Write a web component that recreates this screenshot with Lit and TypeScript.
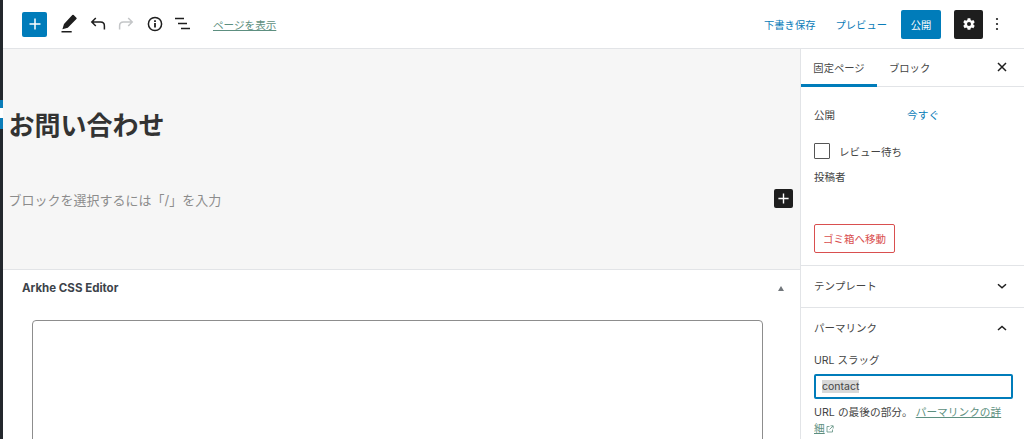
import { LitElement, html, css } from "lit";
import { customElement } from "lit/decorators.js";

@customElement("app-root")
export class AppRoot extends LitElement {
  static styles = css`
    :host { display: block; width: 1024px; height: 439px; overflow: hidden; background: #fff; position: relative;
      font-family: "Inter", "Noto Sans CJK JP", sans-serif; color: #444; font-size: 10.5px; }
    * { box-sizing: border-box; }
    svg { display: block; }
    .frame { display: flex; height: 439px; }
    .strip { width: 3px; background: #23282d; flex: none; display: flex; flex-direction: column; padding-top: 100px; }
    .strip i { display: block; width: 3px; height: 8px; background: #0a7cb8; }
    .strip b { display: block; width: 3px; height: 10px; background: #fff; }
    .strip u { display: block; width: 3px; height: 11px; background: #0a7cb8; }
    .main { flex: 1; display: flex; flex-direction: column; min-width: 0; }
    .top { height: 49px; flex: none; border-bottom: 1px solid #e2e4e7; display: flex; align-items: center; padding: 0 19px 0 19px; }
    .add { width: 25px; height: 25px; background: #007cba; border-radius: 2px; display: flex; align-items: center; justify-content: center; margin-right: 10px; }
    .ico { width: 24px; height: 24px; margin-right: 4.6px; flex: none; }
    .view { margin-left: 13px; color: #5d8f80; text-decoration: underline; font-size: 10.6px; }
    .sp { flex: 1; }
    .link { color: #0a7cb8; font-size: 10.3px; }
    .draft { margin-right: 20px; }
    .pub { width: 40px; height: 29px; background: #007cba; color: #fff; border-radius: 2px; display: flex; align-items: center; justify-content: center; font-size: 10.3px; margin: 0 13px 0 14px; }
    .gear { width: 29px; height: 29px; background: #1e1e1e; border-radius: 2px; display: flex; align-items: center; justify-content: center; margin-right: 8px; }
    .body { flex: 1; display: flex; min-height: 0; }
    .content { width: 797px; flex: none; display: flex; flex-direction: column; }
    .canvas { height: 221px; flex: none; background: #f6f6f6; border-bottom: 1px solid #e2e4e7; padding: 58px 7px 0 6px; }
    .title { font-size: 26px; line-height: 38px; font-weight: 700; color: #333; margin: 0 0 0 -.5px; }
    .hint { display: flex; align-items: center; justify-content: space-between; margin-top: 42px; height: 24px; color: #8c8c8c; font-size: 13px; }
    .hint span { margin-left: -.5px; }
    .plus { width: 19px; height: 19px; background: #1e1e1e; border-radius: 2px; display: flex; align-items: center; justify-content: center; margin-top: -1px; }
    .meta { flex: 1; padding: 0 29px 0 19px; }
    .meta-h { display: flex; align-items: center; justify-content: space-between; height: 36px; font-weight: 700; font-size: 11.5px; color: #3c434a; }
    .tri { width: 0; height: 0; border: 3px solid transparent; border-bottom: 5px solid #72777c; border-top: 0; margin-right: -13px; }
    .ta { margin: 14px 0 0 10px; width: 731px; height: 140px; border: 1px solid #8d8d8d; border-radius: 4px; }
    .side { flex: 1; border-left: 1px solid #e2e4e7; min-width: 0; display: flex; flex-direction: column; }
    .tabs { height: 38px; flex: none; border-bottom: 1px solid #e2e4e7; display: flex; align-items: center; position: relative; }
    .tab { height: 38px; display: flex; align-items: center; justify-content: center; font-size: 10.3px; }
    .tab.on { width: 76px; border-bottom: 3px solid #007cba; padding-top: 3px; }
    .tab.b { margin-left: 12px; }
    .close { margin: -2px 16px 0 auto; }
    .sec { padding: 0 11px 0 13px; border-bottom: 1px solid #e2e4e7; }
    .publish { height: 179px; padding-top: 19px; }
    .row { display: flex; align-items: center; height: 16px; }
    .row .link { margin-left: 72px; font-size: 10.7px; }
    .check { display: flex; align-items: center; gap: 9px; margin-top: 21px; height: 16px; }
    .box { width: 16px; height: 16px; border: 1px solid #555; border-radius: 1px; }
    .author { margin-top: 11px; line-height: 16px; }
    .trash { margin-top: 38px; width: 81px; height: 29px; border: 1px solid #d94f4f; border-radius: 2px; color: #d94f4f; display: flex; align-items: center; justify-content: center; font-size: 10.5px; }
    .head { display: flex; align-items: center; justify-content: space-between; height: 41px; padding-bottom: 2px; }
    .tpl { height: 42px; padding-right: 15px; }
    .perm { border: 0; }
    .perm .head { padding-right: 4px; }
    .slug { margin-top: 4px; line-height: 16px; }
    .inp { margin-top: 5px; width: 199px; height: 25px; border: 2px solid #007cba; border-radius: 2px; display: flex; align-items: center; padding-left: 6px; }
    .inp span { background: #d8d8d8; }
    .help { margin-top: 6px; line-height: 16px; width: 192px; font-size: 10.7px; }
    .help a { color: #5d8f80; text-decoration: underline; }
    .help svg { display: inline; vertical-align: -1px; margin-left: 1px; }
  `;

  render() {
    const plus = (c: string, s = 14) => html`<svg width=${s} height=${s} viewBox="0 0 14 14"><path d="M7 1.500v11M1.500 7h11" stroke=${c} stroke-width="1.500" fill="none"/></svg>`;
    const chev = (up: boolean) => html`<svg width="14" height="14" viewBox="0 0 14 14"><path d=${up ? "M3 9l4-3.600L11 9" : "M3 5.200l4 3.600 4-3.600"} stroke="#1e1e1e" stroke-width="1.500" fill="none"/></svg>`;
    return html`
      <div class="frame">
        <div class="strip"><i></i><b></b><u></u></div>
        <div class="main">
          <div class="top">
            <div class="add">${plus("#fff")}</div>
            <svg class="ico" viewBox="0 0 24 24"><path d="M19.400 6.200l-2.700-2.600a1 1 0 0 0-1.400 0L7 12.500 5.400 17.800l5.400-1.500 8.600-8.700a1 1 0 0 0 0-1.400zM4.500 19.500h10.200V21H4.500z" fill="#1e1e1e" transform="translate(0 -.5)"/></svg>
            <svg class="ico" viewBox="0 0 24 24"><path d="M18.400 17.500v-3.600c0-2.200-1.600-3.900-3.800-3.900H6.200M9.800 6l-4 4 4 4" fill="none" stroke="#1e1e1e" stroke-width="1.500"/></svg>
            <svg class="ico" viewBox="0 0 24 24"><path d="M5.600 17.500v-3.600c0-2.200 1.600-3.900 3.800-3.900h8.400M14.200 6l4 4-4 4" fill="none" stroke="#c4c6c8" stroke-width="1.500"/></svg>
            <svg class="ico" viewBox="0 0 24 24"><circle cx="12" cy="12" r="6.600" fill="none" stroke="#1e1e1e" stroke-width="1.500"/><path d="M11.100 11h1.800v4.600h-1.800zM11.100 8.200h1.800V10h-1.800z" fill="#1e1e1e"/></svg>
            <svg class="ico" viewBox="0 0 24 24"><path d="M5 6.800h9M8 11.800h9M11 16.800h9" stroke="#1e1e1e" stroke-width="1.500" fill="none" transform="translate(-1 -.3)"/></svg>
            <span class="view">ページを表示</span>
            <span class="sp"></span>
            <span class="link draft">下書き保存</span>
            <span class="link">プレビュー</span>
            <div class="pub">公開</div>
            <div class="gear"><svg width="16" height="16" viewBox="0 0 24 24"><path fill="#fff" fill-rule="evenodd" d="M10 3.500h4l.5 2.600 1.600.9 2.500-.9 2 3.400-2 1.700v1.900l2 1.700-2 3.400-2.500-.9-1.600.9-.5 2.600h-4l-.5-2.600-1.600-.9-2.500.9-2-3.400 2-1.700v-1.900l-2-1.700 2-3.400 2.500.9 1.600-.9zM12 9a3 3 0 1 0 0 6 3 3 0 0 0 0-6z"/></svg></div>
            <svg width="14" height="24" viewBox="0 0 14 24"><circle cx="6" cy="7" r="1.100" fill="#1e1e1e"/><circle cx="6" cy="12" r="1.100" fill="#1e1e1e"/><circle cx="6" cy="17" r="1.100" fill="#1e1e1e"/></svg>
          </div>
          <div class="body">
            <div class="content">
              <div class="canvas">
                <h1 class="title">お問い合わせ</h1>
                <div class="hint"><span>ブロックを選択するには「/」を入力</span><div class="plus">${plus("#fff", 13)}</div></div>
              </div>
              <div class="meta">
                <div class="meta-h"><span>Arkhe CSS Editor</span><span class="tri"></span></div>
                <div class="ta"></div>
              </div>
            </div>
            <div class="side">
              <div class="tabs">
                <div class="tab on">固定ページ</div>
                <div class="tab b">ブロック</div>
                <svg class="close" width="12" height="12" viewBox="0 0 12 12"><path d="M2 2l8 8M10 2l-8 8" stroke="#1e1e1e" stroke-width="1.500"/></svg>
              </div>
              <div class="sec publish">
                <div class="row"><span>公開</span><span class="link">今すぐ</span></div>
                <div class="check"><div class="box"></div><span>レビュー待ち</span></div>
                <div class="author">投稿者</div>
                <div class="trash">ゴミ箱へ移動</div>
              </div>
              <div class="sec head tpl"><span>テンプレート</span>${chev(false)}</div>
              <div class="sec perm">
                <div class="head"><span>パーマリンク</span>${chev(true)}</div>
                <div class="slug">URL スラッグ</div>
                <div class="inp"><span>contact</span></div>
                <div class="help">URL の最後の部分。 <a>パーマリンクの詳細</a><svg width="8" height="8" viewBox="0 0 8 8"><path d="M6.500 4.500v2.500h-5.500v-5.500h2.500M4.500 .8h2.700v2.700M7 1L3.500 4.500" stroke="#5d8f80" stroke-width=".8" fill="none"/></svg></div>
              </div>
            </div>
          </div>
        </div>
      </div>
    `;
  }
}
